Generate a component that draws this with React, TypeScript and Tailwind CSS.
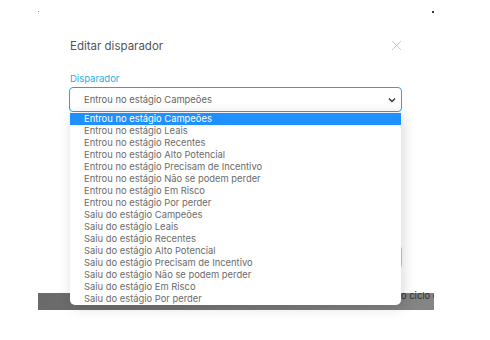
import React from "react";
import { X } from "lucide-react";

const OPTIONS = [
  "Entrou no estágio Campeões",
  "Entrou no estágio Leais",
  "Entrou no estágio Recentes",
  "Entrou no estágio Alto Potencial",
  "Entrou no estágio Precisam de Incentivo",
  "Entrou no estágio Não se podem perder",
  "Entrou no estágio Em Risco",
  "Entrou no estágio Por perder",
  "Saiu do estágio Campeões",
  "Saiu do estágio Leais",
  "Saiu do estágio Recentes",
  "Saiu do estágio Alto Potencial",
  "Saiu do estágio Precisam de Incentivo",
  "Saiu do estágio Não se podem perder",
  "Saiu do estágio Em Risco",
  "Saiu do estágio Por perder",
];

export default function App() {
  return (
    <div className="w-[490px] h-[340px] bg-white overflow-hidden font-['Inter',_'Liberation_Sans',_sans-serif]">
      <div className="ml-[38px] pt-[12px] w-[396px] relative">
        {/* corner marks */}
        <span className="absolute left-0 top-[11px] w-px h-px bg-[#888]" />
        <span className="absolute right-0 top-[11px] w-[2px] h-[2px] bg-[#333]" />

        <div className="bg-white h-[281px] px-[32px] pt-[24px] flex flex-col">
          <div className="flex items-center justify-between h-[20px]">
            <h2 className="text-[11.5px] leading-[20px] text-[#555] font-normal">Editar disparador</h2>
            <X size={17} strokeWidth={1.1} className="text-[#bdbdbd] -mr-[3px] -mt-[2px]" />
          </div>
          <label className="mt-[16px] text-[9.5px] leading-[13px] text-[#1eb0e6]">Disparador</label>
          <div className="mt-[2px] -ml-px h-[25px] w-[333px] border-[1.5px] border-[#1ea8df] rounded-[4px] flex items-center justify-between pl-[14px] pr-[5px]">
            <span className="text-[9.4px] leading-[12px] text-[#666]">Entrou no estágio Campeões</span>
            <svg width="8" height="6" viewBox="0 0 8 6" className="mt-[1px]">
              <path d="M1 1.5 L4 4.5 L7 1.5" fill="none" stroke="#333" strokeWidth="1.4" />
            </svg>
          </div>
          <div className="mt-[134px] self-end w-[70px] h-[22px] border border-[#a8d4ea] rounded-[3px]" />
        </div>

        <div className="h-[17px] bg-gradient-to-r from-[#6a6a6a] to-[#858585] flex justify-end">
          <span className="-mt-[3px] w-[33px] overflow-hidden whitespace-nowrap text-[9.4px] leading-[12px] text-[#333]">o ciclo d</span>
        </div>

        <ul className="absolute left-[32px] top-[113px] w-[331px] bg-white rounded-b-[5px] shadow-[2px_2px_14px_rgba(0,0,0,0.16)] overflow-hidden">
          {OPTIONS.map((o, i) => (
            <li
              key={o}
              className={
                i === 0
                  ? "h-[12px] pl-[14px] text-[9.4px] leading-[12px] bg-[#1e90ff] text-white whitespace-nowrap"
                  : "h-[12px] pl-[14px] text-[9.4px] leading-[12px] text-[#6b6b6b] whitespace-nowrap"
              }
            >
              {o}
            </li>
          ))}
        </ul>
      </div>
    </div>
  );
}
